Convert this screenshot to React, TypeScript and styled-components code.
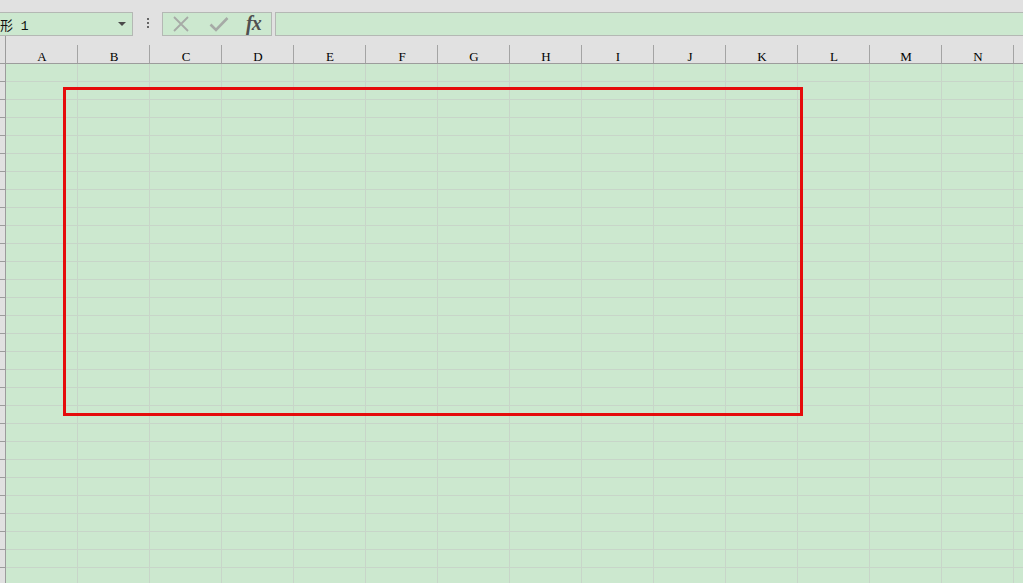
import React from "react";
import styled, { createGlobalStyle } from "styled-components";

const Global = createGlobalStyle`
  html, body { margin: 0; padding: 0; overflow: hidden; }
  body { background: #e1e1e1; width: 1023px; height: 583px; }
`;

const Page = styled.div`
  position: relative;
  width: 1023px;
  height: 583px;
  overflow: hidden;
  background: #e1e1e1;
  font-family: "Liberation Serif", "Noto Sans CJK SC", serif;
`;

const TopBar = styled.div`
  display: flex;
  align-items: flex-start;
  height: 36px;
  box-sizing: border-box;
  padding-top: 12px;
`;

const NameBox = styled.div`
  position: relative;
  display: flex;
  align-items: center;
  width: 133px;
  height: 24px;
  box-sizing: border-box;
  border: 1px solid #b4b8b4;
  border-left: none;
  background: #cce8cf;
  font-family: "Liberation Mono", "Noto Sans CJK SC", monospace;
  font-size: 13px;
  color: #111;
`;

const Arrow = styled.span`
  position: absolute;
  right: 6px;
  top: 9px;
  width: 0;
  height: 0;
  border-left: 4px solid transparent;
  border-right: 4px solid transparent;
  border-top: 4px solid #4a4a4a;
`;

const Dots = styled.div`
  display: flex;
  flex-direction: column;
  gap: 2px;
  margin: 6px 13px 0 14px;
  span {
    display: block;
    width: 2px;
    height: 2px;
    background: #666;
  }
`;

const FxGroup = styled.div`
  display: flex;
  align-items: center;
  width: 110px;
  height: 24px;
  box-sizing: border-box;
  border: 1px solid #b4b8b4;
  background: #cce8cf;
  padding-left: 9px;
`;

const IconSlot = styled.div`
  width: 37px;
  height: 22px;
  display: flex;
  align-items: center;
  justify-content: flex-start;
`;

const Fx = styled.span`
  font-family: "Liberation Serif", serif;
  font-style: italic;
  font-weight: bold;
  font-size: 20px;
  color: #505050;
  letter-spacing: -1px;
  margin-left: 0;
  margin-top: -2px;
`;

const FormulaInput = styled.div`
  flex: 1;
  height: 24px;
  margin-left: 3px;
  box-sizing: border-box;
  border: 1px solid #b4b8b4;
  border-right: none;
  background: #cce8cf;
`;

const HeaderRow = styled.div`
  display: flex;
  height: 28px;
  box-sizing: border-box;
  border-bottom: 1px solid #9c9c9c;
  background: #e1e1e1;
`;

const Corner = styled.div`
  width: 6px;
  flex: none;
  box-sizing: border-box;
  border-right: 1px solid #9c9c9c;
`;

const ColHead = styled.div`
  position: relative;
  width: 72px;
  flex: none;
  box-sizing: border-box;
  display: flex;
  align-items: flex-end;
  justify-content: center;
  padding-bottom: 0;
  line-height: 12px;
  font-size: 13px;
  color: #000;
  &::after {
    content: "";
    position: absolute;
    right: 0;
    top: 9px;
    bottom: 0;
    width: 1px;
    background: #a4a4a4;
  }
`;

const Body = styled.div`
  display: flex;
  flex-direction: column;
`;

const Row = styled.div`
  display: flex;
  height: 18px;
`;

const RowHead = styled.div`
  width: 6px;
  flex: none;
  box-sizing: border-box;
  border-right: 1px solid #9c9c9c;
  border-bottom: 1px solid #9c9c9c;
  background: #e1e1e1;
`;

const Cell = styled.div`
  width: 72px;
  flex: none;
  box-sizing: border-box;
  background: #cce8cf;
  border-right: 1px solid #c8d5c9;
  border-bottom: 1px solid #c8d5c9;
`;

const Shape = styled.div`
  position: absolute;
  left: 63px;
  top: 87px;
  width: 740px;
  height: 329px;
  box-sizing: border-box;
  border: 3px solid #e50b0b;
`;

const cols = ["A", "B", "C", "D", "E", "F", "G", "H", "I", "J", "K", "L", "M", "N", ""];
const rows = Array.from({ length: 30 }, (_, i) => i);

export default function App() {
  return (
    <Page>
      <Global />
      <TopBar>
        <NameBox>
          形 1
          <Arrow />
        </NameBox>
        <Dots>
          <span />
          <span />
          <span />
        </Dots>
        <FxGroup>
          <IconSlot>
            <svg width="18" height="18" viewBox="0 0 18 18">
              <path d="M2 2 L16 16 M16 2 L2 16" stroke="#a6aaa6" strokeWidth="1.8" fill="none" />
            </svg>
          </IconSlot>
          <IconSlot>
            <svg width="20" height="18" viewBox="0 0 20 18">
              <path d="M1.5 9.5 L7 15 L18.5 3" stroke="#a6aaa6" strokeWidth="2.6" fill="none" />
            </svg>
          </IconSlot>
          <Fx>fx</Fx>
        </FxGroup>
        <FormulaInput />
      </TopBar>
      <HeaderRow>
        <Corner />
        {cols.map((c, i) => (
          <ColHead key={i}>{c}</ColHead>
        ))}
      </HeaderRow>
      <Body>
        {rows.map((r) => (
          <Row key={r}>
            <RowHead />
            {cols.map((c, i) => (
              <Cell key={i} />
            ))}
          </Row>
        ))}
      </Body>
      <Shape />
    </Page>
  );
}
